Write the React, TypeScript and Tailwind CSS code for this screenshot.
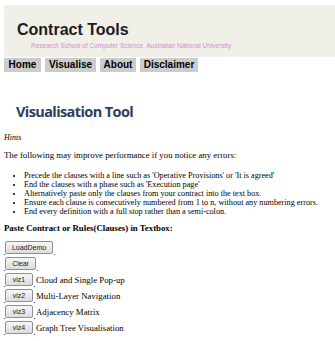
import React from "react";

const serif = { fontFamily: '"Liberation Serif", "Times New Roman", serif' };

function Btn({ label, w }: { label: string; w: string }) {
  return (
    <span className="relative inline-flex items-center">
      <button
        className={`${w} h-[13px] rounded-[2px] border border-[#8f8f8f] bg-gradient-to-b from-[#f6f6f6] to-[#dcdcdc] text-[7px] leading-none text-[#222] flex items-center justify-center`}
        style={{ fontFamily: '"Liberation Sans", Arial, sans-serif' }}
      >
        {label}
      </button>
      <span className="absolute left-[-1px] bottom-[-1px] w-[1px] h-[1px] bg-[#3355cc]" />
      <span className="absolute right-[-2px] bottom-[-1px] w-[1px] h-[1px] bg-[#3355cc]" />
    </span>
  );
}

export default function App() {
  const bullets = [
    "Precede the clauses with a line such as 'Operative Provisions' or 'It is agreed'",
    "End the clauses with a phase such as 'Execution page'",
    "Alternatively paste only the clauses from your contract into the text box.",
    "Ensure each clause is consecutively numbered from 1 to n, without any numbering errors.",
    "End every definition with a full stop rather than a semi-colon.",
  ];
  const vizzes = [
    ["viz1", "Cloud and Single Pop-up"],
    ["viz2", "Multi-Layer Navigation"],
    ["viz3", "Adjacency Matrix"],
    ["viz4", "Graph Tree Visualisation"],
  ];
  const nav: [string, string][] = [
    ["Home", "w-[37px]"],
    ["Visualise", "w-[51px]"],
    ["About", "w-[36px]"],
    ["Disclaimer", "w-[58px]"],
  ];
  return (
    <div className="w-[335px] h-[341px] bg-white overflow-hidden text-black">
      <div className="ml-[4px] mt-[5px] h-[52px] bg-[#f0efe8] pl-[13px] pt-[15px]">
        <div
          className="text-[16px] font-bold leading-[20px] text-[#1c1c1c]"
          style={{ fontFamily: '"Liberation Sans", Arial, sans-serif' }}
        >
          Contract Tools
        </div>
        <div
          className="pl-[14px] mt-[2px] text-[6.5px] leading-[8px] text-[#d08fd0]"
          style={{ fontFamily: '"Liberation Sans", Arial, sans-serif' }}
        >
          Research School of Computer Science, Australian National University
        </div>
      </div>
      <div
        className="flex gap-[4px] ml-[4px] mt-[1px] text-[10px] font-bold leading-[14px]"
        style={{ fontFamily: '"Liberation Sans", Arial, sans-serif' }}
      >
        {nav.map(([n, w]) => (
          <div key={n} className={`${w} bg-[#cccccc] h-[14px] flex items-center justify-center`}>
            {n}
          </div>
        ))}
      </div>
      <div
        className="ml-[16px] mt-[31px] text-[14.5px] font-bold leading-[18px] text-[#2c3e5c] tracking-[-0.6px]"
        style={{ fontFamily: '"Open Sans", Verdana, sans-serif' }}
      >
        Visualisation Tool
      </div>
      <div className="px-[4px]" style={serif}>
        <div className="mt-[12px] italic text-[8px] leading-[10px]">Hints</div>
        <div className="mt-[7px] text-[8.8px] leading-[10px]">
          The following may improve performance if you notice any errors:
        </div>
        <ul className="mt-[11px] pl-[20px] list-disc text-[8.2px] leading-[9px]">
          {bullets.map((b) => (
            <li key={b}>{b}</li>
          ))}
        </ul>
        <div className="mt-[7px] font-bold text-[8.8px] leading-[10px]">
          Paste Contract or Rules(Clauses) in Textbox:
        </div>
        <div className="mt-[8px] flex flex-col gap-[3px] pl-[1px]">
          <div className="h-[13px] flex items-center">
            <Btn label="LoadDemo" w="w-[48px]" />
          </div>
          <div className="h-[13px] flex items-center">
            <Btn label="Clear" w="w-[31px]" />
          </div>
          {vizzes.map(([v, t]) => (
            <div key={v} className="h-[13px] flex items-center gap-[3px]">
              <Btn label={v} w="w-[28px]" />
              <span className="text-[8.8px] leading-[10px]">{t}</span>
            </div>
          ))}
        </div>
      </div>
    </div>
  );
}
